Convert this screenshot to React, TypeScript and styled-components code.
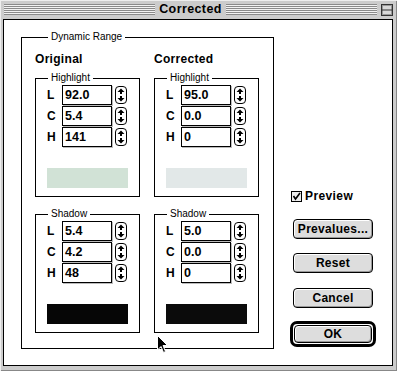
import React from 'react';
import styled, { createGlobalStyle } from 'styled-components';

const GlobalStyle = createGlobalStyle`
  html, body { margin: 0; padding: 0; background: #cccccc; }
  body { font-family: "Liberation Sans", Arial, sans-serif; color: #000; }
  * { box-sizing: border-box; }
`;

const Window = styled.div`
  width: 397px;
  height: 371px;
  background: #cccccc;
  display: flex;
  flex-direction: column;
  padding: 0 4px 5px 3px;
  box-shadow: inset 1px 1px 0 #eeeeee, inset -1px -1px 0 #888888;
`;

const TitleBar = styled.div`
  height: 19px;
  display: flex;
  align-items: flex-start;
  padding: 4px 0 0 1px;
`;

const Stripes = styled.div`
  flex: 1;
  height: 11px;
  background: repeating-linear-gradient(to bottom, #8a8a8a 0 1px, #f2f2f2 1px 2px);
`;

const Title = styled.div`
  font-size: 12.5px;
  font-weight: bold;
  line-height: 11px;
  padding: 0 4px;
  letter-spacing: 0.4px;
`;

const CollapseBox = styled.svg`
  margin-left: 4px;
  flex: none;
`;

const Content = styled.div`
  flex: 1;
  position: relative;
  background: #ffffff;
  border: 1px solid #000;
  display: flex;
  padding: 11px 0 0 17px;
`;

const Group = styled.fieldset`
  margin: 0;
  border: 1px solid #000;
  min-width: 0;
`;

const RangeGroup = styled(Group)`
  width: 253px;
  padding: 9px 13px 15px 13px;
  display: flex;
  gap: 14px;
  align-items: flex-start;
  align-self: flex-start;
`;

const Legend = styled.legend<{ $indent: number }>`
  font-size: 10px;
  line-height: 12px;
  padding: 0 3px;
  margin-left: ${(p) => p.$indent}px;
`;

const Column = styled.div`
  width: 105px;
  display: flex;
  flex-direction: column;
`;

const Heading = styled.div`
  font-size: 12px;
  font-weight: bold;
  line-height: 14px;
  margin-bottom: 6px;
  letter-spacing: 0.3px;
`;

const SubGroup = styled(Group)<{ $gapTop?: number }>`
  width: 105px;
  padding: 1px 0 8px 11px;
  margin-top: ${(p) => p.$gapTop ?? 0}px;
`;

const Rows = styled.div`
  display: flex;
  flex-direction: column;
  gap: 1px;
`;

const Row = styled.div`
  display: flex;
  align-items: center;
  height: 20px;
`;

const Label = styled.span`
  width: 15px;
  font-size: 12px;
  font-weight: bold;
`;

const Field = styled.div`
  width: 50px;
  height: 20px;
  border: 1px solid #000;
  background: #fff;
  font-size: 12.5px;
  font-weight: bold;
  line-height: 18px;
  padding-left: 2px;
  box-shadow: 1px 1px 0 #bbbbbb;
`;

const Spinner = styled.svg`
  margin-left: 3px;
  flex: none;
`;

const Swatch = styled.div<{ $color: string }>`
  width: 81px;
  height: 20px;
  margin-top: 21px;
  background: ${(p) => p.$color};
`;

const Side = styled.div`
  width: 86px;
  margin-left: 16px;
  margin-bottom: 18px;
  align-self: flex-end;
  display: flex;
  flex-direction: column;
  align-items: center;
`;

const CheckRow = styled.div`
  align-self: flex-start;
  margin-left: 1px;
  margin-bottom: 16px;
  display: flex;
  align-items: center;
  gap: 3px;
  font-size: 12px;
  font-weight: bold;
  line-height: 14px;
  letter-spacing: 0.4px;
`;

const Button = styled.div<{ $mb?: number }>`
  width: 80px;
  height: 20px;
  border: 1px solid #000;
  border-radius: 4px;
  background: #dddddd;
  box-shadow: inset 1px 1px 0 #ffffff, inset -1px -1px 0 #999999;
  display: flex;
  align-items: center;
  justify-content: center;
  font-size: 12px;
  font-weight: bold;
  letter-spacing: 0.3px;
  margin-bottom: ${(p) => p.$mb ?? 0}px;
`;

const DefaultRing = styled.div`
  border: 3px solid #000;
  border-radius: 7px;
  padding: 1px;
`;

const OkButton = styled(Button)`
  width: 78px;
  height: 18px;
`;

const Cursor = styled.svg`
  position: absolute;
  left: 153px;
  top: 315px;
`;

function SpinnerIcon() {
  return (
    <Spinner width="12" height="18" viewBox="0 0 12 18">
      <rect x="0.5" y="0.5" width="11" height="17" rx="3.5" fill="#fff" stroke="#000" />
      <path d="M6 2.5 L9.5 6 L7 6 L7 8 L5 8 L5 6 L2.5 6 Z" fill="#000" />
      <path d="M5 10 L7 10 L7 12 L9.5 12 L6 15.5 L2.5 12 L5 12 Z" fill="#000" />
    </Spinner>
  );
}

type Values = { L: string; C: string; H: string };

function ValueGroup({ title, values, color, gapTop }: { title: string; values: Values; color: string; gapTop?: number }) {
  return (
    <SubGroup $gapTop={gapTop}>
      <Legend $indent={1}>{title}</Legend>
      <Rows>
        {(['L', 'C', 'H'] as const).map((k) => (
          <Row key={k}>
            <Label>{k}</Label>
            <Field>{values[k]}</Field>
            <SpinnerIcon />
          </Row>
        ))}
      </Rows>
      <Swatch $color={color} />
    </SubGroup>
  );
}

export default function App() {
  return (
    <>
      <GlobalStyle />
      <Window>
        <TitleBar>
          <Stripes />
          <Title>Corrected</Title>
          <Stripes />
          <CollapseBox width="12" height="12" viewBox="0 0 12 12">
            <rect x="0.5" y="0.5" width="11" height="11" fill="#d8d8d8" stroke="#333" />
            <rect x="1.5" y="1.5" width="9" height="9" fill="none" stroke="#999" />
            <line x1="1" y1="6" x2="11" y2="6" stroke="#333" />
          </CollapseBox>
        </TitleBar>
        <Content>
          <RangeGroup>
            <Legend $indent={13}>Dynamic Range</Legend>
            <Column>
              <Heading>Original</Heading>
              <ValueGroup title="Highlight" values={{ L: '92.0', C: '5.4', H: '141' }} color="#d1e2d6" />
              <ValueGroup title="Shadow" values={{ L: '5.4', C: '4.2', H: '48' }} color="#060606" gapTop={11} />
            </Column>
            <Column>
              <Heading>Corrected</Heading>
              <ValueGroup title="Highlight" values={{ L: '95.0', C: '0.0', H: '0' }} color="#e2e8e8" />
              <ValueGroup title="Shadow" values={{ L: '5.0', C: '0.0', H: '0' }} color="#0b0b0b" gapTop={11} />
            </Column>
          </RangeGroup>
          <Side>
            <CheckRow>
              <svg width="11" height="11" viewBox="0 0 11 11">
                <rect x="0.5" y="0.5" width="10" height="10" fill="#eeeeee" stroke="#000" />
                <path d="M2.5 5 L4.5 8 L9 2" fill="none" stroke="#000" strokeWidth="1.6" />
              </svg>
              Preview
            </CheckRow>
            <Button $mb={14}>Prevalues...</Button>
            <Button $mb={15}>Reset</Button>
            <Button $mb={13}>Cancel</Button>
            <DefaultRing>
              <OkButton>OK</OkButton>
            </DefaultRing>
          </Side>
          <Cursor width="12" height="19" viewBox="0 0 12 19">
            <path d="M0.5 0.5 L0.5 15 L4 11.5 L6.5 17.5 L8.5 16.5 L6 10.5 L10.5 10.5 Z" fill="#000" stroke="#fff" strokeWidth="1" />
          </Cursor>
        </Content>
      </Window>
    </>
  );
}
